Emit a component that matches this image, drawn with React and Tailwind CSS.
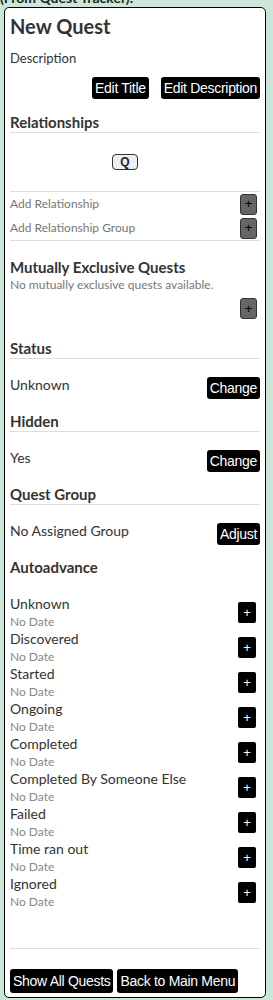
import React from "react";

const statuses = [
  "Unknown",
  "Discovered",
  "Started",
  "Ongoing",
  "Completed",
  "Completed By Someone Else",
  "Failed",
  "Time ran out",
  "Ignored",
];

// --- small building blocks ---
const BlackButton = ({ children, className = "" }) => (
  <button
    className={`h-[22px] px-[3px] bg-black text-white rounded-[3px] text-[14px] leading-[22px] tracking-[-0.3px] font-['Liberation_Sans',Arial,sans-serif] ${className}`}
  >
    {children}
  </button>
);

const GrayPlus = () => (
  <button className="w-[17px] h-[21px] bg-[#666] border border-[#333] rounded-[3px] text-black text-[13px] leading-[18px] font-['Liberation_Sans',Arial,sans-serif]">
    +
  </button>
);

const Heading = ({ children, line = true }) => (
  <h3
    className={`text-[15px] font-bold leading-[19px] text-[#333] ${
      line ? "border-b border-[#ddd]" : ""
    }`}
  >
    {children}
  </h3>
);

const ValueRow = ({ label, action }) => (
  <div className="flex justify-between items-start pt-[17px] pb-[13px]">
    <span className="text-[14px] leading-[17px] text-[#333]">{label}</span>
    <BlackButton className="mt-[1px]">{action}</BlackButton>
  </div>
);

export default function App() {
  return (
    <div className="min-h-screen bg-[#cce7d9] font-['Lato','Noto_Sans',sans-serif] overflow-hidden">
      <p className="-mt-[10px] text-[14px] font-bold leading-[16px] text-[#222]">
        (From Quest Tracker).
      </p>

      <div className="ml-[4px] mt-[1px] w-[262px] bg-white border border-black rounded-[5px] px-[5px] pt-[6px] pb-[4px]">
        {/* Title */}
        <h2 className="text-[20px] font-bold leading-[24px] text-[#333]">New Quest</h2>
        <p className="mt-[12px] text-[13px] leading-[16px] text-[#333]">Description</p>
        <div className="mt-[11px] flex justify-end gap-[12px]">
          <BlackButton>Edit Title</BlackButton>
          <BlackButton>Edit Description</BlackButton>
        </div>

        {/* Relationships */}
        <div className="mt-[14px]">
          <Heading>Relationships</Heading>
          <div className="h-[58px] flex items-center pl-[102px]">
            <button className="w-[26px] h-[16px] bg-[#efefef] border border-[#333] rounded-[4px] text-[12px] leading-[14px] font-bold text-[#222] font-['Liberation_Sans',Arial,sans-serif]">
              Q
            </button>
          </div>
          <div className="border-t border-b border-[#ddd] pr-[3px]">
            <div className="h-[24px] flex items-center justify-between">
              <span className="text-[12px] text-[#777]">Add Relationship</span>
              <GrayPlus />
            </div>
            <div className="h-[24px] flex items-center justify-between">
              <span className="text-[12px] text-[#777]">Add Relationship Group</span>
              <GrayPlus />
            </div>
          </div>
        </div>

        {/* Mutually exclusive */}
        <div className="mt-[17px]">
          <Heading line={false}>Mutually Exclusive Quests</Heading>
          <p className="text-[12px] leading-[15px] text-[#777]">No mutually exclusive quests available.</p>
          <div className="flex justify-end pr-[3px] mt-[6px]">
            <GrayPlus />
          </div>
        </div>

        {/* Status */}
        <div className="mt-[20px]">
          <Heading>Status</Heading>
          <ValueRow label="Unknown" action="Change" />
          <Heading>Hidden</Heading>
          <ValueRow label="Yes" action="Change" />
          <Heading>Quest Group</Heading>
          <ValueRow label="No Assigned Group" action="Adjust" />
          <Heading line={false}>Autoadvance</Heading>
        </div>

        {/* Autoadvance list */}
        <div className="mt-[18px] pr-[4px]">
          {statuses.map((s) => (
            <div key={s} className="h-[35px] flex justify-between items-start">
              <div>
                <div className="text-[14px] leading-[18px] text-[#333]">{s}</div>
                <div className="text-[12px] leading-[17px] text-[#888]">No Date</div>
              </div>
              <button className="mt-[7px] w-[18px] h-[21px] bg-black text-white rounded-[2px] text-[13px] leading-[21px] font-['Liberation_Sans',Arial,sans-serif]">
                +
              </button>
            </div>
          ))}
        </div>

        {/* Footer */}
        <div className="mt-[38px] border-t border-[#ddd] pt-[20px] flex gap-[4px]">
          <BlackButton className="h-[24px] leading-[24px]">Show All Quests</BlackButton>
          <BlackButton className="h-[24px] leading-[24px]">Back to Main Menu</BlackButton>
        </div>
      </div>
    </div>
  );
}
